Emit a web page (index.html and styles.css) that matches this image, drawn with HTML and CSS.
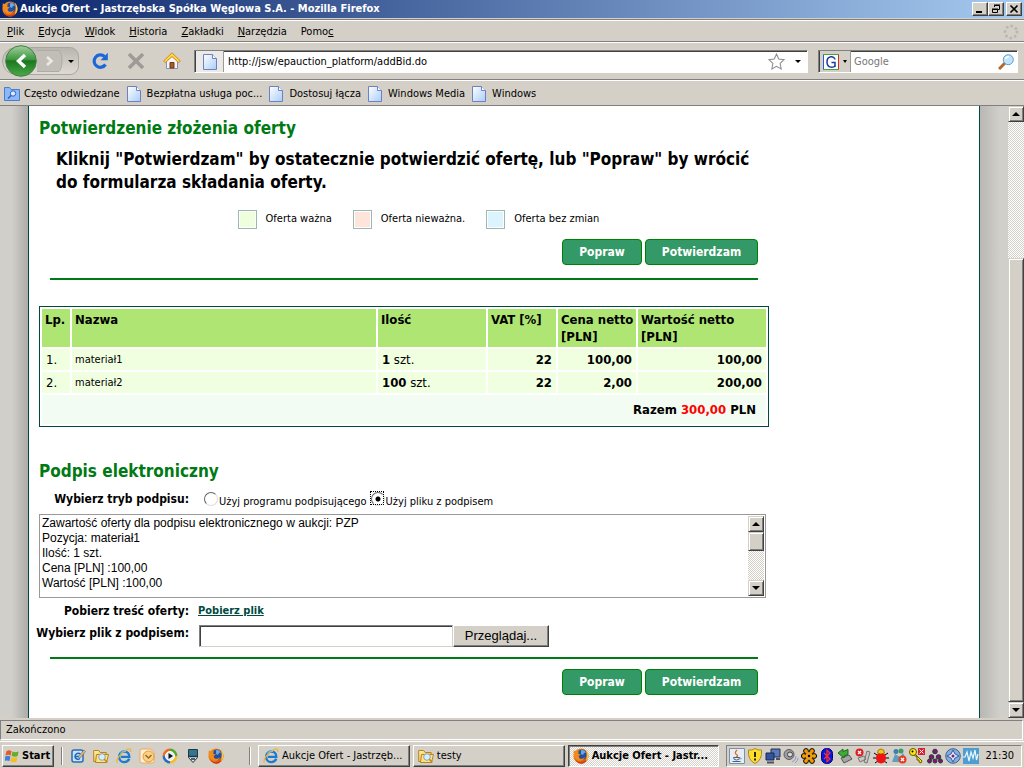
FILE: index.html
```html
<!DOCTYPE html>
<html lang="pl">
<head>
<meta charset="utf-8">
<title>Aukcje Ofert - Jastrzębska Spółka Węglowa S.A.</title>
<link rel="stylesheet" href="styles.css">
</head>
<body>
<svg class="defs" aria-hidden="true">
  <defs>
    <linearGradient id="green" x2="0" y2="1"><stop stop-color="#a3cf9c"/><stop offset=".45" stop-color="#3d9740"/><stop offset=".5" stop-color="#1c7620"/><stop offset="1" stop-color="#4cab4b"/></linearGradient>
    <linearGradient id="sheet" x2="1" y2="1"><stop stop-color="#fff"/><stop offset="1" stop-color="#a9cdf8"/></linearGradient>
    <linearGradient id="fold" x2="1" y2="1"><stop stop-color="#fff3ae"/><stop offset="1" stop-color="#e9ac30"/></linearGradient>
    <linearGradient id="fox" x2="1" y2="1"><stop stop-color="#f79a20"/><stop offset="1" stop-color="#d5470d"/></linearGradient>
  </defs>
  <symbol id="firefox" viewBox="0 0 16 16">
    <circle cx="8" cy="8" r="7.6" fill="url(#fox)"/>
    <circle cx="8.8" cy="6.6" r="5.2" fill="#234f9e"/>
    <path d="M8 2.400c2-1 4 0 5 2l-2 .5-1 2-2-1z" fill="#6ba7df"/>
    <path d="M.8 2.200 3 3.600l3-.4-1 2.200 2.800 1-2.200 1.500.8 2.300c2 1.300 4 .6 5.400-1.200C11 13.500 5 14 2.500 10.500.5 8 .3 5 .8 2.200z" fill="#f28a1c"/>
    <path d="M13 1.800c3.300 3 3.500 9-.4 12 1.500-4 1.400-8 .4-12z" fill="#fbc53c"/>
    <path d="M2 11c3 4.500 8.500 4.500 11.500 1-1 4-8 6-11.500-1z" fill="#c9320c"/>
  </symbol>
  <symbol id="page" viewBox="0 0 14 16">
    <path d="M.5.5h9l4 4v11H.5z" fill="url(#sheet)" stroke="#6f7fc4"/>
    <path d="M9.500.5v4h4" fill="#fff" stroke="#6f7fc4"/>
  </symbol>
  <symbol id="folder" viewBox="0 0 16 16">
    <path d="M.7 13.500V2.500h5l1.500 2h6v9z" fill="url(#fold)" stroke="#b98320"/>
    <path d="m2.500 14.500 1-8h12l-2 8z" fill="#ffe27e" stroke="#b98320"/>
    <circle cx="9" cy="9" r="3.300" fill="#d9eefb" stroke="#86a6bd"/><path d="m11.300 11.300 3 3" stroke="#b98320" stroke-width="1.500"/>
  </symbol>
  <symbol id="ie" viewBox="0 0 16 16">
    <path d="M13.300 10.800c-1 2.300-3 3.300-5.100 3.300-3.200 0-5.100-2.400-5.100-5.400S5.200 3.500 8.300 3.500c3.200 0 5.100 2.200 5 5.400H5" fill="none" stroke="#1c7bd0" stroke-width="2.400"/>
    <path d="M1.500 14.800C-1 12 6 3.500 11 1.500c3-1.200 4.500-.4 3.500 2.500" fill="none" stroke="#f0b432" stroke-width="1.300"/>
    <path d="M4 5.500C5.500 3.500 8 3 10 3.500" fill="none" stroke="#7cc6f5"/>
  </symbol>
</svg>

<header class="titlebar">
  <svg class="i16"><use href="#firefox"/></svg>
  <span class="window-title">Aukcje Ofert - Jastrzębska Spółka Węglowa S.A. - Mozilla Firefox</span>
  <button class="win" aria-label="Minimalizuj"><svg viewBox="0 0 10 10"><path d="M1 8h6" stroke="#000" stroke-width="2"/></svg></button>
  <button class="win" aria-label="Przywróć"><svg viewBox="0 0 10 10"><path d="M3.500 3V1.500h5v4H7M3 1h6M1.500 5.500h5v3h-5zM1 5h6" fill="none" stroke="#000"/></svg></button>
  <button class="win win-close" aria-label="Zamknij"><svg viewBox="0 0 10 10"><path d="m1.500 1.500 7 7m0-7-7 7" stroke="#000" stroke-width="1.600"/></svg></button>
</header>

<nav class="menubar">
  <a href="#"><u>P</u>lik</a><a href="#"><u>E</u>dycja</a><a href="#"><u>W</u>idok</a><a href="#"><u>H</u>istoria</a><a href="#"><u>Z</u>akładki</a><a href="#"><u>N</u>arzędzia</a><a href="#">Pomo<u>c</u></a>
  <svg class="throbber" viewBox="0 0 16 16"><circle cx="8" cy="8" r="6" fill="none" stroke="#bab7b0" stroke-width="3" stroke-dasharray="0 4.710" stroke-linecap="round"/></svg>
</nav>

<div class="toolbar">
  <div class="backfwd">
    <button class="back" aria-label="Wstecz"><svg viewBox="0 0 32 32"><circle cx="16" cy="16" r="15.300" fill="url(#green)" stroke="#417f42"/><path d="m20 10-6.500 6 6.500 6" fill="none" stroke="#fff" stroke-width="3.400"/></svg></button>
    <button class="fwd" aria-label="Dalej"><svg viewBox="0 0 26 22"><path d="M0 .5h22q3 3 3 10.500t-3 10.500H0" fill="#c1beb8" stroke="#aeaba5"/><path d="m10 7 4.500 4-4.500 4" fill="none" stroke="#eceae6" stroke-width="2.600"/></svg></button>
    <button class="drop" aria-label="Historia kart"></button>
  </div>
  <button class="tool" aria-label="Odśwież"><svg viewBox="0 0 18 18"><path d="M14.500 12.500A6.200 6.200 0 1 1 13.500 4.500" fill="none" stroke="#1d66d8" stroke-width="3.200"/><path d="M16.800.8v7.400H9.600z" fill="#1d66d8"/></svg></button>
  <button class="tool" aria-label="Zatrzymaj"><svg viewBox="0 0 18 18"><path d="m2 2 14 14M16 2 2 16" stroke="#9e9b96" stroke-width="3.600"/></svg></button>
  <button class="tool" aria-label="Strona startowa"><svg viewBox="0 0 18 18"><path d="M3.500 9v7.500h11V9L9 4z" fill="#f4f4fa" stroke="#8791b5"/><path d="M7 16v-5.500h4V16z" fill="#aa5c27" stroke="#713914"/><path d="M9 .8.600 9l1.700 1.600L9 4.600l6.700 6L17.400 9z" fill="#ffd54c" stroke="#cf8d18"/></svg></button>
  <div class="address">
    <span class="favicon"><svg class="page-icon"><use href="#page"/></svg></span>
    <input type="text" aria-label="Adres" value="http://jsw/epauction_platform/addBid.do">
    <svg class="star" viewBox="0 0 16 16"><path d="m8 1 2.100 4.700 5 .6-3.700 3.500 1 5.200L8 12.500 3.600 15l1-5.200L.9 6.300l5-.6z" fill="#fff" stroke="#8d8d8d"/></svg>
    <button class="drop" aria-label="Lista adresów"></button>
  </div>
  <div class="search">
    <button class="engine" aria-label="Wyszukiwarka"><svg viewBox="0 0 16 16"><path d="M0 0h16v16H0z" fill="#fff"/><path d="M.5 0v16" stroke="#2a5bd7"/><path d="M0 .5h16M0 15.500h16" stroke="#3fa63f"/><path d="M15.500 1v14" stroke="#d02c25"/><path d="M12 5.500C11.500 1.500 4 1.500 4 8s7.500 6 8 3.500V8.500H8.500M12 9v4" fill="none" stroke="#2036a0" stroke-width="1.500"/></svg><i class="arrow"></i></button>
    <input type="text" aria-label="Szukaj" placeholder="Google">
    <button class="go" aria-label="Szukaj w Google"><svg viewBox="0 0 16 16"><path d="m1 15 6-6" stroke="#b56829" stroke-width="3"/><circle cx="10.300" cy="5.700" r="5" fill="#bfe4fb" stroke="#5f9bd2"/><path d="M7.500 5c.5-2 2-2.500 3.500-2.300" fill="none" stroke="#fff" stroke-width="1.500"/></svg></button>
  </div>
</div>

<nav class="bookmarks">
  <a href="#"><svg class="i16" viewBox="0 0 16 16"><path d="M.5 14.500V1.500h5l1.500 2h8.500v11z" fill="#8cb8f5" stroke="#4a7cd0"/><circle cx="9" cy="7.500" r="2.700" fill="#d8eaff" stroke="#2d5ec0"/><path d="m7 9.500-3 3" stroke="#2d5ec0" stroke-width="1.500"/></svg>Często odwiedzane</a>
  <a href="#"><svg class="page-icon"><use href="#page"/></svg>Bezpłatna usługa poc...</a>
  <a href="#"><svg class="page-icon"><use href="#page"/></svg>Dostosuj łącza</a>
  <a href="#"><svg class="page-icon"><use href="#page"/></svg>Windows Media</a>
  <a href="#"><svg class="page-icon"><use href="#page"/></svg>Windows</a>
</nav>

<div class="viewport">
  <div class="backdrop">
    <main class="sheet">
      <div class="column">
        <h2>Potwierdzenie złożenia oferty</h2>
        <p class="lead">Kliknij "Potwierdzam" by ostatecznie potwierdzić ofertę, lub "Popraw" by wrócić<br>do formularza składania oferty.</p>
        <div class="legend">
          <span><i class="swatch valid"></i>Oferta ważna</span>
          <span><i class="swatch invalid"></i>Oferta nieważna.</span>
          <span><i class="swatch same"></i>Oferta bez zmian</span>
        </div>
        <div class="actions top"><button class="act">Popraw</button><button class="act wide">Potwierdzam</button></div>
        <table class="offer">
          <colgroup><col class="c-no"><col><col class="c-qty"><col class="c-vat"><col class="c-price"><col class="c-value"></colgroup>
          <thead><tr><th>Lp.</th><th>Nazwa</th><th>Ilość</th><th>VAT [%]</th><th>Cena netto<br>[PLN]</th><th>Wartość netto<br>[PLN]</th></tr></thead>
          <tbody>
            <tr><td>1.</td><td class="name">materiał1</td><td><b>1</b> szt.</td><td class="num">22</td><td class="num">100,00</td><td class="num">100,00</td></tr>
            <tr><td>2.</td><td class="name">materiał2</td><td><b>100</b> szt.</td><td class="num">22</td><td class="num">2,00</td><td class="num">200,00</td></tr>
          </tbody>
          <tfoot><tr><td colspan="6">Razem <span class="total">300,00</span> PLN</td></tr></tfoot>
        </table>
        <h2>Podpis elektroniczny</h2>
        <div class="row mode">
          <span class="label" id="mode">Wybierz tryb podpisu:</span>
          <div class="radios" role="radiogroup" aria-labelledby="mode">
            <label><input type="radio" name="mode">Użyj programu podpisującego</label>
            <label><input type="radio" name="mode" class="focused" checked>Użyj pliku z podpisem</label>
          </div>
        </div>
        <div class="textbox">
          <textarea aria-label="Zawartość oferty" readonly>Zawartość oferty dla podpisu elektronicznego w aukcji: PZP
Pozycja: materiał1
Ilość: 1 szt.
Cena [PLN] :100,00
Wartość [PLN] :100,00</textarea>
          <div class="scroll"><button aria-label="W górę"><i class="arrow up"></i></button><span class="thumb short"></span><span class="rest"></span><button aria-label="W dół"><i class="arrow"></i></button></div>
        </div>
        <div class="row"><span class="label">Pobierz treść oferty:</span><a class="download" href="#">Pobierz plik</a></div>
        <div class="row file"><label class="label" for="file">Wybierz plik z podpisem:</label><input id="file" type="text"><button class="browse">Przeglądaj...</button></div>
        <div class="actions bottom"><button class="act">Popraw</button><button class="act wide">Potwierdzam</button></div>
      </div>
    </main>
  </div>
  <div class="scroll main-scroll"><button aria-label="W górę"><i class="arrow up"></i></button><span class="before"></span><span class="thumb"></span><button aria-label="W dół"><i class="arrow"></i></button></div>
</div>

<footer class="status"><span>Zakończono</span></footer>

<div class="taskbar">
  <button class="start"><svg viewBox="0 0 16 16"><path d="M1.500 3Q4 1 7 2.800L6 7.500Q3.500 6 .5 7.500z" fill="#e65a28"/><path d="M8 3.200q3 1.500 6.500 0L13.500 8Q10 9.500 7 7.800z" fill="#64ac2e"/><path d="M.3 8.500Q3 7 5.800 8.600l-1 4.800Q2.500 12-.8 13.500z" fill="#3d7fdf"/><path d="M6.800 9q3 1.500 6.500 0l-1 5Q9 15.500 5.800 13.700z" fill="#f6bd22"/></svg>Start</button>
  <i class="sep"></i>
  <div class="quick">
    <svg viewBox="0 0 16 16"><rect x="2" y="2" width="11" height="12" rx="2" fill="#c7e2fa" stroke="#2c6bb5" stroke-width="1.500"/><path d="M10.500 6C8 4 5 6 5 8.500S8 12 10 10.500M5 8.500h4" fill="none" stroke="#1767bd" stroke-width="1.500"/><path d="m8 9 6-7 1.500 1.500L10 10z" fill="#edba67" stroke="#516682" stroke-width=".6"/></svg>
    <svg><use href="#folder"/></svg>
    <svg><use href="#ie"/></svg>
    <svg viewBox="0 0 16 16"><path d="M1 3q0-2 2-2h8l4 3v9q0 2-2 2H3q-2 0-2-2z" fill="#fff0d7" stroke="#eda75d"/><circle cx="9.500" cy="8.500" r="5.500" fill="#fbd182" stroke="#e7953b"/><path d="m6.500 7 3 3 3-3" fill="none" stroke="#946b32" stroke-width="1.500"/></svg>
    <svg viewBox="0 0 16 16"><path d="M8 .5A7.500 7.500 0 0 1 15.500 8H8z" fill="#58a72e"/><path d="M15.500 8A7.500 7.500 0 0 1 8 15.500V8z" fill="#f5bd2a"/><path d="M8 15.500A7.500 7.500 0 0 1 .5 8H8z" fill="#2870bd"/><path d="M.5 8A7.500 7.500 0 0 1 8 .5V8z" fill="#e76e25"/><circle cx="8" cy="8" r="4.500" fill="#e3eefa" stroke="#fff"/><path d="m6.500 5 4.500 3-4.500 3z" fill="#111"/></svg>
    <svg viewBox="0 0 16 16"><path d="M3.500 1.500h9v8l-4.500 5-4.500-5z" fill="#dce7ec" stroke="#203844"/><path d="M4 2h8v6H4z" fill="#327591"/><path d="M4 8.500h8M6 11h4" stroke="#213642" stroke-width="1.500"/></svg>
    <svg><use href="#firefox"/></svg>
  </div>
  <i class="sep"></i>
  <div class="tasks">
    <button><svg class="i16"><use href="#ie"/></svg>Aukcje Ofert - Jastrzęb...</button>
    <button><svg class="i16"><use href="#folder"/></svg>testy</button>
    <button class="active"><svg class="i16"><use href="#firefox"/></svg>Aukcje Ofert - Jastr...</button>
  </div>
  <div class="tray">
    <svg viewBox="0 0 16 16"><path d="M.5.5h15v15H.5z" fill="#e7edf2" stroke="#7692a8"/><path d="M8 2Q5 5 7.500 6.500T7 9" fill="none" stroke="#dc6d20" stroke-width="1.300"/><path d="M4.500 9.500h6q0 2.500-3 2.500t-3-2.500M3.500 13.500h8M11 9.500q2 1 0 2" fill="none" stroke="#3c668c"/></svg>
    <svg viewBox="0 0 16 16"><path d="M8 .5q3 2 6.500 1.500Q15.500 12 8 15.500.5 12 1.500 2 5 2.500 8 .5z" fill="#ffdd2b" stroke="#a88c24"/><path d="M8 4v5M8 10.500v2" stroke="#29250f" stroke-width="2"/></svg>
    <svg viewBox="0 0 16 16"><path d="M6 1h9v8H6z" fill="#5d78bb" stroke="#22304f"/><path d="M1 5h8v7H1z" fill="#31549f" stroke="#1c2949"/><path d="M2 14.500h7M11 11h4" stroke="#4b5367" stroke-width="2"/></svg>
    <svg viewBox="0 0 16 16"><circle cx="6" cy="6.500" r="5" fill="#9d9da1" stroke="#5b5b60"/><circle cx="7" cy="6.500" r="2.500" fill="#d9d9dc" stroke="#444"/><path d="M9 14q4-1 4-6M12 15q3-2 3-5" fill="none" stroke="#8d9ecc"/></svg>
    <svg viewBox="0 0 16 16"><g fill="#f59a00" stroke="#000"><circle cx="5" cy="3" r="2.400"/><circle cx="11" cy="3" r="2.400"/><circle cx="2.800" cy="8" r="2.400"/><circle cx="13.200" cy="8" r="2.400"/><circle cx="5" cy="13" r="2.400"/><circle cx="11" cy="13" r="2.400"/></g><path d="m5 3 6 10M11 3 5 13M3 8h10" stroke="#f59a00" stroke-width="2.400"/><circle cx="8" cy="8" r="1.200"/></svg>
    <svg viewBox="0 0 16 16"><rect x="2.500" y=".5" width="11" height="15" rx="5" fill="#0717df" stroke="#000080"/><path d="m5 5 6 6-3 2.500v-11L11 5l-6 6" fill="none" stroke="#f13030" stroke-width="1.300"/></svg>
    <svg viewBox="0 0 16 16"><path d="m4 10 8-3 3 4-8 4z" fill="#a4a4a4" stroke="#555"/><path d="m1 5 5-4v2.500l5-2v5L7 8v2z" fill="#40aa37" stroke="#1d6a1c"/></svg>
    <svg viewBox="0 0 16 16"><path d="m9 14 3-11 3 1-3 11zM3 10l6-2 2 3-6 3z" fill="#c7c7c7" stroke="#777"/><circle cx="4.500" cy="4.500" r="4" fill="#dd1d23"/><path d="m3 3 3 3m0-3L3 6" stroke="#fff" stroke-width="1.300"/></svg>
    <svg viewBox="0 0 16 16"><path d="M1 5l3 2M15 5l-3 2M0 10h4m8 0h4M2 15l3-2m9 2-3-2" stroke="#000"/><ellipse cx="8" cy="10" rx="5" ry="5.500" fill="#ee1414"/><path d="M4.500 5q0-4 3.500-4t3.500 4q-3.500 2-7 0z" fill="#f6c610" stroke="#8c5400" stroke-width=".7"/></svg>
    <svg viewBox="0 0 16 16"><circle cx="5" cy="3.500" r="2.500" fill="#3984aa"/><circle cx="10" cy="3" r="2.500" fill="#3a9d65"/><path d="m1 14 3-8 5 3 3-4 3 6-6 3z" fill="#5d9fbd"/><circle cx="11.500" cy="11.500" r="4" fill="#e43d28"/><path d="m10 10 3 3m0-3-3 3" stroke="#fff" stroke-width="1.300"/></svg>
    <svg viewBox="0 0 16 16"><path d="m6 6 7 7-1 2-2-1v-2H8V9L5 7z" fill="#ffe715" stroke="#645800"/><circle cx="4" cy="4" r="3.500" fill="#ffe715" stroke="#645800"/><circle cx="3.500" cy="3.500" r="1"/><path d="M9 0h7v7H9z" fill="#d52031"/><path d="m10.500 1.500 4 4m0-4-4 4" stroke="#fff"/></svg>
    <svg viewBox="0 0 16 16"><g fill="#8d0f76" stroke="#203c36"><circle cx="8" cy="3.500" r="2.300"/><circle cx="4.500" cy="9" r="2.300"/><circle cx="11.500" cy="9" r="2.300"/><circle cx="2.500" cy="13" r="2"/><circle cx="8" cy="13" r="2"/><circle cx="13.500" cy="13" r="2"/></g></svg>
    <svg viewBox="0 0 16 16"><circle cx="8" cy="8" r="7.300" fill="#7fb0dc" stroke="#3a6495"/><path d="m8 2 2 4 4 2-4 2-2 4-2-4-4-2 4-2z" fill="#dfe9ff" stroke="#4453a0"/><circle cx="8" cy="8" r="1.500" fill="#77217a"/></svg>
    <svg viewBox="0 0 16 16"><path d="M0 0h16v16H0z" fill="#4d9dd1"/><path d="M0 9h2l2-5 2 9 2-9 2 6 2-8 1.500 10L15 6" fill="none" stroke="#e9f8ff" stroke-width="1.200"/></svg>
    <time>21:30</time>
  </div>
</div>
</body>
</html>
```
FILE: styles.css
```css
:root {
  --face: #d4d0c8;
  --dark: #808080;
  --ui: "DejaVu Sans Condensed", "DejaVu Sans", sans-serif;
}
* { box-sizing: border-box; }
body {
  margin: 0;
  height: 100vh;
  display: flex;
  flex-direction: column;
  overflow: hidden;
  background: var(--face);
  color: #000;
  font: 11px/14px var(--ui);
}
button, input, textarea { font: inherit; color: inherit; margin: 0; padding: 0; border: 0; border-radius: 0; }
button { background: none; }
a { color: inherit; text-decoration: none; }
svg { display: block; flex: none; }
.defs { position: absolute; width: 0; height: 0; }
.i16 { width: 16px; height: 16px; }
.page-icon { width: 14px; height: 16px; }

.arrow { display: block; width: 0; height: 0; border: 4px solid transparent; border-top-color: #000; border-bottom: 0; }
.arrow.up { border-top: 0; border-bottom: 4px solid #000; }

/* window chrome */
.titlebar { flex: none; height: 19px; padding: 0 2px; display: flex; align-items: center; background: linear-gradient(to right, #0a246a, #a6caf0); border-bottom: 1px solid var(--face); }
.window-title { flex: 1; margin-left: 2px; color: #fff; font-weight: bold; white-space: nowrap; }
.win { width: 16px; height: 14px; display: grid; place-items: center; background: var(--face); border: 1px solid; border-color: #fff #404040 #404040 #fff; box-shadow: inset -1px -1px var(--dark); }
.win svg { width: 10px; height: 10px; }
.win-close { margin-left: 2px; }

.menubar, .toolbar, .bookmarks { flex: none; display: flex; align-items: center; border-top: 1px solid var(--dark); box-shadow: inset 0 1px #fff; }
.menubar { height: 22px; padding: 2px 5px 0 7px; gap: 14px; }
.throbber { width: 16px; height: 16px; margin-left: auto; }

.toolbar { height: 38px; padding: 1px 6px 0 2px; gap: 18px; }
.backfwd { display: flex; align-items: center; height: 28px; width: 77px; border: 1px solid #aaa7a1; border-radius: 14px 9px 9px 14px; background: linear-gradient(#b9b6b0, #dedbd5); }
.back { width: 32px; height: 32px; margin-left: 2px; }
.back svg { width: 32px; height: 32px; }
.fwd svg { width: 26px; height: 22px; }
.drop { flex: 1; height: 18px; display: grid; place-items: center; }
.drop::after { content: ""; border: 3px solid transparent; border-top-color: #000; border-bottom: 0; }
.tool svg { width: 18px; height: 18px; }
.toolbar .tool:nth-of-type(1) { margin-left: -6px; }
.address, .search { height: 23px; display: flex; align-items: center; background: #fff; border: 1px solid; border-color: var(--dark) #fff #fff var(--dark); box-shadow: inset 1px 1px #404040; padding: 1px 0 0 1px; }
.address { flex: 1; margin-left: -5px; }
.address input, .search input { flex: 1; min-width: 0; outline: 0; background: none; }
.favicon { width: 28px; height: 21px; display: grid; place-items: center; background: #eceae6; border-right: 1px solid #999; margin-right: 4px; }
.star { width: 17px; height: 17px; }
.address .drop { flex: none; width: 18px; margin-left: 4px; }
.search { width: 200px; margin-left: -8px; }
.engine { width: 31px; height: 21px; display: flex; align-items: center; gap: 4px; padding-left: 3px; background: var(--face); border-right: 1px solid #999; margin-right: 3px; }
.engine svg, .go svg { width: 16px; height: 16px; }
.engine .arrow { border-width: 3px 2px 0; }
.search input::placeholder { color: #777; opacity: 1; }
.go { margin-right: 3px; }

.bookmarks { height: 27px; padding: 3px 4px 0; gap: 7px; border-bottom: 1px solid var(--dark); }
.bookmarks a { display: flex; align-items: center; gap: 6px; white-space: nowrap; }
.bookmarks a:first-child { gap: 4px; }

/* scrolling area */
.viewport { flex: 1; min-height: 0; display: flex; }
.backdrop { flex: 1; min-width: 0; padding: 0 28px; background: linear-gradient(to right, #d0cfca 12px, #adaca8 28px, #b8b7b3 calc(100% - 28px), #d0cfca calc(100% - 8px)); overflow: hidden; }
.sheet { height: 100%; background: #fff; border: solid #00493f; border-width: 0 1px; padding: 12px 10px; overflow: hidden; }
.column { max-width: 730px; }
.scroll { width: 16px; display: flex; flex-direction: column; background: repeating-conic-gradient(#fff 0 25%, var(--face) 0 50%) 0 0 / 2px 2px; }
.scroll button, .scroll .thumb { flex: none; height: 16px; display: grid; place-items: center; background: var(--face); border: 1px solid; border-color: var(--face) #404040 #404040 var(--face); box-shadow: inset 1px 1px #fff, inset -1px -1px var(--dark); }
.scroll .short { height: 19px; }
.scroll .rest { flex: 1; }
.main-scroll .before { flex: 136; }
.main-scroll .thumb { flex: 444; }

/* page */
h2 { margin: 0; font: bold 17px/20px var(--ui); color: #007a14; }
.lead { margin: 10px 0 0 17px; font: bold 17px/23px var(--ui); white-space: nowrap; }
.legend { display: flex; justify-content: center; gap: 21px; margin-top: 16px; padding-left: 29px; }
.legend span { display: flex; gap: 9px; line-height: 17px; }
.swatch { width: 19px; height: 19px; border: 1px solid #9cb8b1; box-shadow: inset 0 0 0 1px #fff; }
.valid { background: #eeffde; }
.invalid { background: #ffe4dc; }
.same { background: #dcf4ff; }
.actions { display: flex; justify-content: flex-end; gap: 3px; margin: 0 11px; }
.top { margin-top: 10px; padding-bottom: 13px; border-bottom: 2px solid #007a14; }
.bottom { margin-top: 10px; padding-top: 10px; border-top: 2px solid #007a14; }
.act { width: 80px; height: 26px; border: 1px solid #008000; border-radius: 4px; background: #339966; color: #fff; font-size: 12px; font-weight: bold; }
.wide { width: 113px; }

.offer { width: 100%; margin: 26px 0 34px; table-layout: fixed; border: 1px solid #00493f; border-spacing: 2px; font-size: 13px; line-height: 17px; }
.c-no { width: 28px; }
.c-qty { width: 108px; }
.c-vat { width: 68px; }
.c-price { width: 78px; }
.c-value { width: 128px; }
.offer th { padding: 2px 0 2px 3px; height: 38px; background: #afe573; text-align: left; vertical-align: top; white-space: nowrap; }
.offer td { padding: 2px 4px; background: #f0ffe0; }
.offer .name { padding: 2px 3px; font-size: 11px; }
.offer .num { text-align: right; font-weight: bold; }
.offer tfoot td { height: 29px; padding: 2px 10px; background: #f2fcf2; text-align: right; font-weight: bold; }
.total { color: #f00; }

.row { display: flex; height: 22px; }
.label { width: 150px; margin-right: 9px; flex: none; text-align: right; white-space: nowrap; font-size: 12px; font-weight: bold; line-height: 16px; }
.mode { margin-top: 10px; height: 23px; }
.radios { display: flex; gap: 4px; }
.radios label { display: flex; align-items: flex-end; height: 18px; gap: 3px; }
.radios input { appearance: none; width: 12px; height: 12px; margin: 0 0 5px 6px; }
.radios input::before { content: ""; display: block; width: 12px; height: 12px; border: 1px solid; border-color: #666 #ddd #ddd #666; border-radius: 50%; background: #fff; }
.radios input:checked::before { background: radial-gradient(#000 2px, #fff 3px); }
.radios .focused { margin-left: 0; outline: 1px dotted #000; }
.textbox { display: flex; height: 84px; margin-right: 3px; padding: 1px; border: 1px solid #999; }
.textbox textarea { flex: 1; padding: 0 1px; resize: none; overflow: hidden; outline: 0; background: #fff; font: 12px/15px "Liberation Sans", Arial, sans-serif; }
.textbox + .row { margin-top: 5px; }
.download { color: #00493f; font-weight: bold; text-decoration: underline; line-height: 16px; }
.file #file { width: 254px; height: 22px; margin-left: 1px; background: #fff; border: 1px solid; border-color: var(--dark) var(--face) var(--face) var(--dark); box-shadow: inset 1px 1px #404040; }
.file .label { margin-right: 9px; display: flex; justify-content: flex-end; }
.browse { width: 96px; height: 22px; background: var(--face); border: 1px solid; border-color: #fff #404040 #404040 #fff; box-shadow: inset -1px -1px var(--dark); font: 13px/18px "Liberation Sans", Arial, sans-serif; }

/* bottom bars */
.status { flex: none; height: 23px; padding: 2px 1px 1px 0; }
.status span { display: block; height: 20px; padding: 2px 5px; border: 1px solid; border-color: var(--dark) #fff #fff var(--dark); }
.taskbar { flex: none; height: 27px; display: flex; align-items: center; padding: 2px 2px 0; border-top: 1px solid #fff; }
.start, .tasks button { display: flex; align-items: center; height: 22px; border: 1px solid; border-color: #fff #404040 #404040 #fff; box-shadow: inset -1px -1px var(--dark); white-space: nowrap; }
.start { width: 52px; padding: 0 2px; gap: 2px; font-weight: bold; }
.start svg { width: 15px; height: 16px; }
.sep { flex: none; width: 2px; height: 18px; margin: 0 7px; background: var(--dark); border-right: 1px solid #fff; }
.quick { display: flex; gap: 7px; width: 172px; }
.quick svg { width: 16px; height: 16px; }
.tasks { flex: 1; min-width: 0; display: flex; gap: 3px; }
.tasks button { flex: 1; min-width: 0; max-width: 152px; padding: 0 4px; gap: 3px; overflow: hidden; }
.tasks .active { font-weight: bold; border-color: #404040 #fff #fff #404040; box-shadow: inset 1px 1px var(--dark); background: repeating-conic-gradient(#fff 0 25%, var(--face) 0 50%) 0 0 / 2px 2px; }
.tray { display: flex; align-items: center; gap: 2px; height: 22px; margin-left: 7px; padding: 0 7px 0 2px; border: 1px solid; border-color: var(--dark) #fff #fff var(--dark); }
.tray svg { width: 16px; height: 16px; }
.tray time { margin-left: 4px; }
```
